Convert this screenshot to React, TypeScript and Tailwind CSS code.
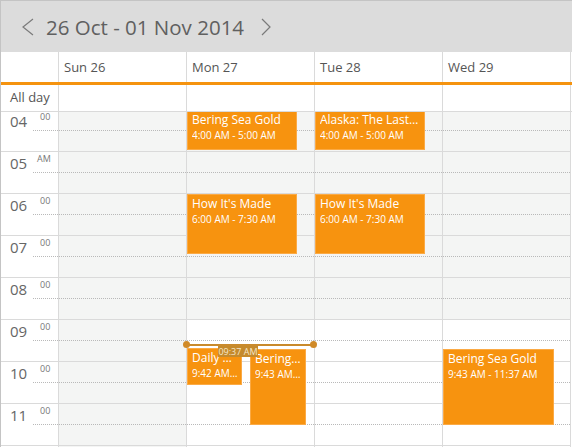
import React from "react";

const days = ["Sun 26", "Mon 27", "Tue 28", "Wed 29"];
const hours = [4, 5, 6, 7, 8, 9, 10, 11, 12];

type Ev = { title: string; time: string; top: number; left: number; w: number; h: number };

const events: Ev[][] = [
  [],
  [
    { title: "Bering Sea Gold", time: "4:00 AM - 5:00 AM", top: 0, left: 0, w: 110, h: 40 },
    { title: "How It's Made", time: "6:00 AM - 7:30 AM", top: 84, left: 0, w: 110, h: 60 },
    { title: "Daily Planet", time: "9:42 AM - 10:35 AM", top: 238, left: 0, w: 55, h: 37 },
    { title: "Bering Sea Gold", time: "9:43 AM - 11:37 AM", top: 239, left: 63, w: 56, h: 76 },
  ],
  [
    { title: "Alaska: The Last Frontier", time: "4:00 AM - 5:00 AM", top: 0, left: 0, w: 110, h: 40 },
    { title: "How It's Made", time: "6:00 AM - 7:30 AM", top: 84, left: 0, w: 110, h: 60 },
  ],
  [{ title: "Bering Sea Gold", time: "9:43 AM - 11:37 AM", top: 239, left: 0, w: 111, h: 76 }],
];

function Event({ e }: { e: Ev }) {
  return (
    <div
      className="absolute z-[5] border border-[#fbaa45] bg-[#f7930f] pl-[4px] pr-[3px] pt-[1px] text-white overflow-hidden"
      style={{ top: e.top, left: e.left, width: e.w, height: e.h }}
    >
      <div className="text-[12px] leading-[16px] whitespace-nowrap overflow-hidden text-ellipsis">{e.title}</div>
      <div className="text-[10px] leading-[14px] whitespace-nowrap overflow-hidden text-ellipsis">{e.time}</div>
    </div>
  );
}

export default function App() {
  return (
    <div
      className="w-[572px] h-[447px] overflow-hidden bg-white border-l border-t border-[#c4c4c4] flex flex-col"
      style={{ fontFamily: '"Open Sans", "Noto Sans", sans-serif' }}
    >
      {/* toolbar */}
      <div className="h-[51px] shrink-0 bg-[#dcdcdc] flex items-center pl-[21px]">
        <svg width="12" height="18" viewBox="0 0 12 18" className="shrink-0">
          <polyline points="11,1 1,9 11,17" fill="none" stroke="#7a7a7a" strokeWidth="1.2" />
        </svg>
        <span className="ml-[12px] text-[20.5px] leading-[26px] text-[#606060] whitespace-nowrap">26 Oct - 01 Nov 2014</span>
        <svg width="10" height="18" viewBox="0 0 10 18" className="ml-[17px] shrink-0">
          <polyline points="1,1 9,9 1,17" fill="none" stroke="#7a7a7a" strokeWidth="1.2" />
        </svg>
      </div>

      {/* day headers */}
      <div className="h-[30px] shrink-0 flex border-b-[3px] border-[#f5930f] box-content">
        <div className="w-[57px] shrink-0" />
        {days.map((d, i) => (
          <div
            key={d}
            className={`w-[128px] shrink-0 border-l border-[#dadada] pl-[5px] pt-[6px] text-[13px] leading-[18px] text-[#555] ${i === 3 ? "border-r w-[129px]" : ""}`}
          >
            {d}
          </div>
        ))}
      </div>

      {/* all day */}
      <div className="h-[27px] shrink-0 flex border-b border-[#dadada]">
        <div className="w-[57px] shrink-0 pl-[9px] pt-[3px] text-[13px] leading-[18px] text-[#555]">All day</div>
        {days.map((d, i) => (
          <div
            key={d}
            className={`w-[128px] shrink-0 border-l border-[#dadada] ${i === 3 ? "border-r w-[129px]" : ""}`}
          />
        ))}
      </div>

      {/* body */}
      <div className="flex-1 overflow-hidden">
        <div className="flex mt-[-2px]">
          {/* time column */}
          <div className="w-[57px] shrink-0">
            {hours.map((h) => (
              <div key={h} className="h-[42px] flex border-b border-[#dadada]">
                <div className="w-[32px] shrink-0 pl-[9px] pt-[1px] text-[15px] leading-[20px] text-[#666]">
                  {String(h).padStart(2, "0")}
                </div>
                <div className="flex-1 flex flex-col">
                  <div className="h-[21px] border-b border-dotted border-[#b9b9b9] text-[#777]">
                    {h === 5 ? (
                      <span className="block pl-[4px] pt-[1px] text-[9px] leading-[12px]">AM</span>
                    ) : (
                      <span className="block pl-[7px] pt-[1px] text-[9px] leading-[11px]">00</span>
                    )}
                  </div>
                  <div className="flex-1" />
                </div>
              </div>
            ))}
          </div>

          {/* day columns */}
          {days.map((d, di) => (
            <div
              key={d}
              className={`relative w-[128px] shrink-0 border-l border-[#dadada] ${di === 3 ? "border-r w-[129px]" : ""}`}
            >
              {hours.map((h) => {
                const gray = di === 0 || h < 9;
                return (
                  <div key={h} className={gray ? "bg-[#f4f5f4]" : "bg-white"}>
                    <div className="h-[21px] border-b border-dotted border-[#b9b9b9]" />
                    <div className="h-[21px] border-b border-[#dadada]" />
                  </div>
                );
              })}
              {events[di].map((e, k) => (
                <Event key={k} e={e} />
              ))}
              {di === 1 && (
                <div className="absolute z-10 left-[-2px] top-[234px] w-[130px] h-[2px] bg-[#c98a2c]">
                  <div className="absolute left-[-2px] top-[-3px] w-[7px] h-[7px] rounded-full bg-[#d08a28]" />
                  <div className="absolute right-[-2px] top-[-3px] w-[7px] h-[7px] rounded-full bg-[#d08a28]" />
                  <div className="absolute left-[33px] top-[2px] w-[40px] h-[11px] bg-[#c58a2d] text-[9px] leading-[11px] text-[#f6e6c6] text-center whitespace-nowrap">
                    09:37 AM
                  </div>
                </div>
              )}
            </div>
          ))}
        </div>
      </div>
    </div>
  );
}
